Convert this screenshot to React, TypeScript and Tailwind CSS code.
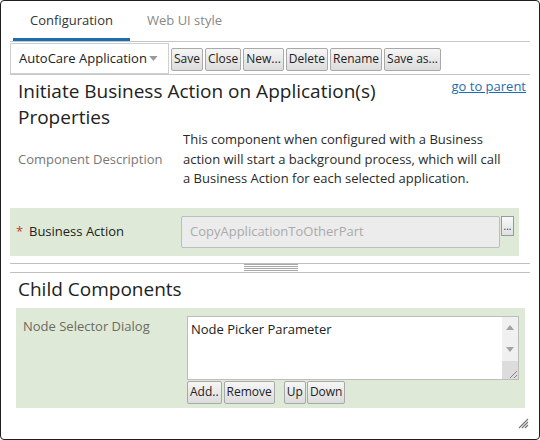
import React from "react";

const FONT = { fontFamily: '"Open Sans", "Noto Sans", sans-serif' };

function Btn({ children, className = "" }: { children: React.ReactNode; className?: string }) {
  return (
    <button
      className={
        "h-[23px] px-[2px] border border-[#a9a9a9] rounded-[2px] bg-gradient-to-b from-[#f6f6f6] to-[#dcdcdc] text-[12px] leading-none text-[#222] " +
        className
      }
    >
      {children}
    </button>
  );
}

function Grip() {
  return (
    <svg width="11" height="11" viewBox="0 0 11 11">
      <path d="M10 1 L1 10 M10 4 L4 10 M10 7 L7 10" stroke="#777" strokeWidth="1.2" />
    </svg>
  );
}

export default function App() {
  return (
    <div style={FONT} className="w-[540px] h-[440px] bg-white border border-[#1e1e1e] rounded-[4px] overflow-hidden relative text-[#333]">
      {/* tabs */}
      <div className="flex h-[40px] pl-[12px] items-stretch">
        <div className="w-[117px] flex items-center justify-center border-b-[3px] border-[#1f6db0] text-[13px] text-[#333] pt-[3px]">
          Configuration
        </div>
        <div className="px-[17px] flex items-center text-[13px] text-[#888]">Web UI style</div>
      </div>

      <div className="px-[9px]">
        {/* toolbar */}
        <div className="h-[34px] border-t border-b border-[#c6c6c6] flex items-center">
          <div className="w-[159px] h-[31px] border border-[#cfcfcf] flex items-center pl-[8px] pr-[10px] mt-[1px]">
            <span className="w-[131px] overflow-hidden whitespace-nowrap text-[13px] text-[#222]">AutoCare Application</span>
            <svg width="9" height="5" viewBox="0 0 10 6" className="ml-[1px]">
              <path d="M0 0 L10 0 L5 6 Z" fill="#999" />
            </svg>
          </div>
          <div className="flex gap-[2px] ml-[2px] mt-[2px]">
            <Btn>Save</Btn>
            <Btn>Close</Btn>
            <Btn>New...</Btn>
            <Btn>Delete</Btn>
            <Btn>Rename</Btn>
            <Btn>Save as...</Btn>
          </div>
        </div>

        {/* heading */}
        <div className="flex pl-[8px] pr-[4px] mt-[3px]">
          <div className="flex-1 text-[19px] leading-[26px] text-[#222]">
            Initiate Business Action on Application(s)
            <br />
            Properties
          </div>
          <a className="text-[13px] text-[#1f6db0] underline -mt-[1px]">go to parent</a>
        </div>

        {/* description */}
        <div className="flex pl-[8px] items-center">
          <div className="w-[165px] text-[13px] text-[#777]">Component Description</div>
          <div className="w-[335px] text-[13px] leading-[19.5px] text-[#2a2a2a] whitespace-nowrap">
            This component when configured with a Business
            <br />
            action will start a background process, which will call
            <br />a Business Action for each selected application.
          </div>
        </div>

        {/* business action */}
        <div className="mt-[19px] mr-[11px] h-[48px] bg-[#dfe9d8] flex items-center pl-[6px]">
          <span className="text-[#c0392b] text-[13px] w-[13px]">*</span>
          <span className="w-[152px] text-[13px] text-[#222]">Business Action</span>
          <div className="w-[319px] h-[32px] bg-[#ececec] border border-[#bdbdbd] rounded-[2px] flex items-center pl-[8px] text-[13px] text-[#aaa]">
            CopyApplicationToOtherPart
          </div>
          <div className="self-start mt-[8px] ml-[1px] w-[13px] h-[20px] border border-[#999] bg-gradient-to-b from-[#f8f8f8] to-[#e0e0e0] text-[10px] leading-[18px] text-center text-[#333]">
            ...
          </div>
        </div>

        {/* splitter */}
        <div className="mt-[7px] h-[10px] border-t border-b border-[#c0c0c0] flex justify-center items-center">
          <div className="w-[54px] flex flex-col gap-[1px] ml-[2px]">
            <div className="h-px bg-[#a8a8a8]" />
            <div className="h-px bg-[#a8a8a8]" />
            <div className="h-px bg-[#a8a8a8]" />
            <div className="h-px bg-[#a8a8a8]" />
          </div>
        </div>

        {/* child components */}
        <div className="pl-[8px] mt-[3px] text-[19px] leading-[26px] text-[#222]">Child Components</div>
        <div className="ml-[6px] mr-[5px] mt-[6px] h-[100px] bg-[#dfe9d8] flex pt-[8px] pl-[7px]">
          <div className="w-[164px] text-[13px] text-[#6b6b60] pt-[1px]">Node Selector Dialog</div>
          <div className="flex flex-col">
            <div className="w-[332px] h-[64px] bg-white border border-[#bdbdbd] flex">
              <div className="flex-1 pl-[3px] pt-[3px] text-[13px] text-[#222]">Node Picker Parameter</div>
              <div className="w-[16px] bg-[#f0f0f0] flex flex-col">
                <div className="h-[22px] flex items-center justify-center">
                  <svg width="8" height="5" viewBox="0 0 8 5"><path d="M0 5 L4 0 L8 5 Z" fill="#a3a3a3" /></svg>
                </div>
                <div className="h-[22px] flex items-center justify-center">
                  <svg width="8" height="5" viewBox="0 0 8 5"><path d="M0 0 L8 0 L4 5 Z" fill="#a3a3a3" /></svg>
                </div>
                <div className="flex-1 bg-[#dcdcdc] flex items-end justify-end">
                  <svg width="9" height="9" viewBox="0 0 9 9"><path d="M8 1 L1 8 M8 5 L5 8" stroke="#888" /></svg>
                </div>
              </div>
            </div>
            <div className="flex mt-[1px]">
              <Btn className="h-[21px]">Add..</Btn>
              <Btn className="h-[21px] ml-[2px]">Remove</Btn>
              <Btn className="h-[21px] ml-[9px]">Up</Btn>
              <Btn className="h-[21px] ml-[1px]">Down</Btn>
            </div>
          </div>
        </div>
      </div>

      <div className="absolute right-[10px] bottom-[10px]">
        <Grip />
      </div>
    </div>
  );
}
